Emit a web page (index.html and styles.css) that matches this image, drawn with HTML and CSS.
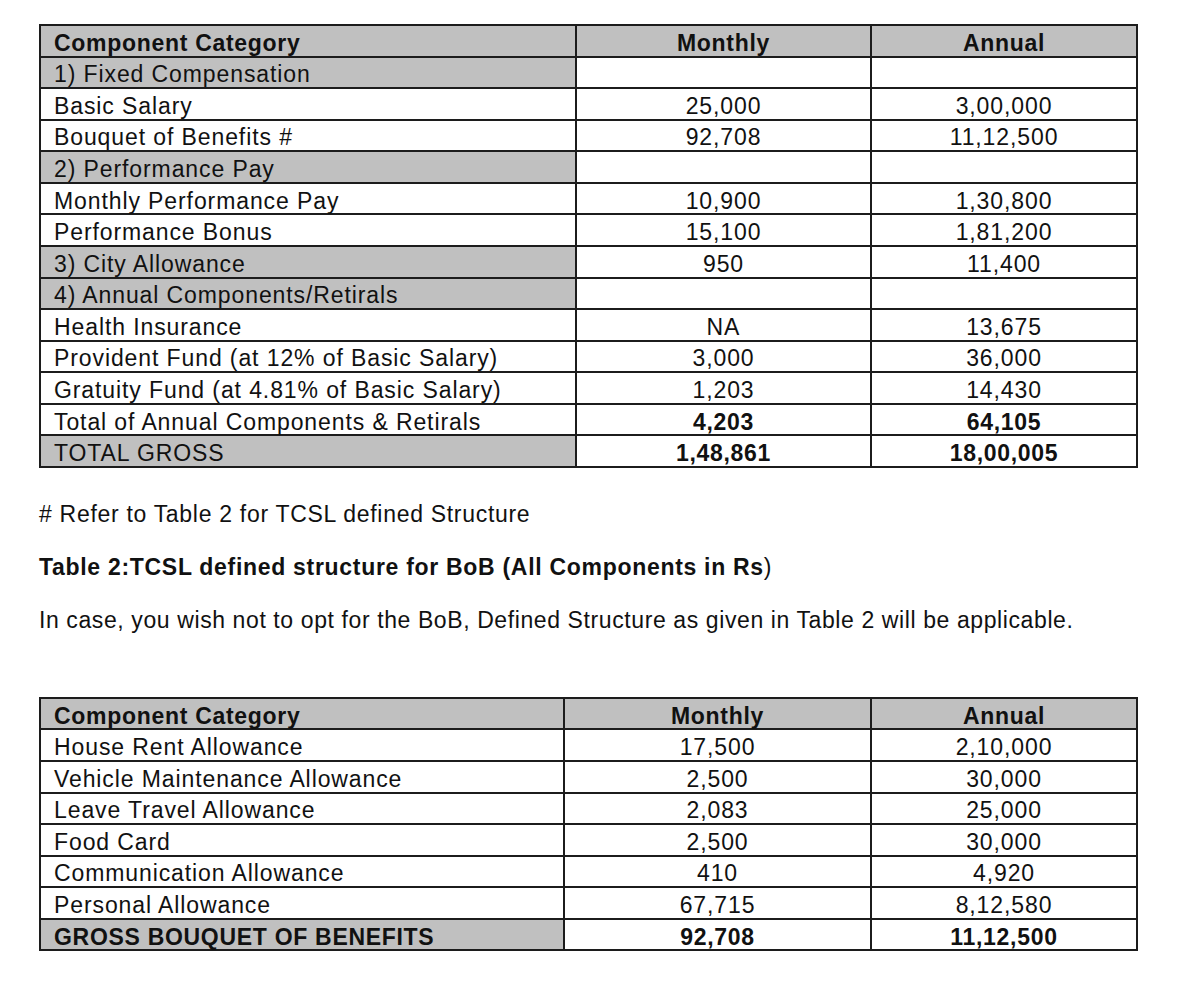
FILE: index.html
```html
<!DOCTYPE html>
<html>
<head>
<meta charset="utf-8">
<link rel="stylesheet" href="styles.css">
</head>
<body>
<div class="page">
  <table class="grid t1">
    <colgroup><col class="c1a"><col class="c2a"><col class="c3"></colgroup>
    <tr class="head"><td class="shade b">Component Category</td><td class="shade b num">Monthly</td><td class="shade b num">Annual</td></tr>
    <tr><td class="shade">1) Fixed Compensation</td><td></td><td></td></tr>
    <tr><td>Basic Salary</td><td class="num">25,000</td><td class="num">3,00,000</td></tr>
    <tr><td>Bouquet of Benefits #</td><td class="num">92,708</td><td class="num">11,12,500</td></tr>
    <tr><td class="shade">2) Performance Pay</td><td></td><td></td></tr>
    <tr><td>Monthly Performance Pay</td><td class="num">10,900</td><td class="num">1,30,800</td></tr>
    <tr><td>Performance Bonus</td><td class="num">15,100</td><td class="num">1,81,200</td></tr>
    <tr><td class="shade">3) City Allowance</td><td class="num">950</td><td class="num">11,400</td></tr>
    <tr><td class="shade">4) Annual Components/Retirals</td><td></td><td></td></tr>
    <tr><td>Health Insurance</td><td class="num">NA</td><td class="num">13,675</td></tr>
    <tr><td>Provident Fund (at 12% of Basic Salary)</td><td class="num">3,000</td><td class="num">36,000</td></tr>
    <tr><td>Gratuity Fund (at 4.81% of Basic Salary)</td><td class="num">1,203</td><td class="num">14,430</td></tr>
    <tr><td>Total of Annual Components &amp; Retirals</td><td class="num b">4,203</td><td class="num b">64,105</td></tr>
    <tr><td class="shade">TOTAL GROSS</td><td class="num b">1,48,861</td><td class="num b">18,00,005</td></tr>
  </table>

  <p class="note">#&nbsp;Refer to Table 2 for TCSL defined Structure</p>
  <p class="title"><span class="b">Table 2:TCSL defined structure for BoB (All Components in Rs</span>)</p>
  <p class="note tight">In case, you wish not to opt for the BoB, Defined Structure as given in Table 2 will be applicable.</p>

  <table class="grid t2">
    <colgroup><col class="c1b"><col class="c2b"><col class="c3"></colgroup>
    <tr class="head"><td class="shade b">Component Category</td><td class="shade b num">Monthly</td><td class="shade b num">Annual</td></tr>
    <tr><td>House Rent Allowance</td><td class="num">17,500</td><td class="num">2,10,000</td></tr>
    <tr><td>Vehicle Maintenance Allowance</td><td class="num">2,500</td><td class="num">30,000</td></tr>
    <tr><td>Leave Travel Allowance</td><td class="num">2,083</td><td class="num">25,000</td></tr>
    <tr><td>Food Card</td><td class="num">2,500</td><td class="num">30,000</td></tr>
    <tr><td>Communication Allowance</td><td class="num">410</td><td class="num">4,920</td></tr>
    <tr><td>Personal Allowance</td><td class="num">67,715</td><td class="num">8,12,580</td></tr>
    <tr><td class="shade b">GROSS BOUQUET OF BENEFITS</td><td class="num b">92,708</td><td class="num b">11,12,500</td></tr>
  </table>
</div>
</body>
</html>
```

FILE: styles.css
```css
html, body {
  margin: 0;
  padding: 0;
  background: #ffffff;
}
.page {
  padding: 24px 0 0 39px;
  font-family: "Liberation Sans", Arial, Helvetica, sans-serif;
  font-size: 23px;
  letter-spacing: 0.7px;
  color: #111111;
}
.grid {
  border-collapse: collapse;
  table-layout: fixed;
  width: 1097px;
  border: 2px solid #444444;
}
.grid td {
  height: 31.57px;
  box-sizing: border-box;
  padding: 4px 13px 0 13px;
  border: 2px solid #1c1c1c;
  line-height: 24px;
  letter-spacing: 0.9px;
  white-space: nowrap;
  vertical-align: middle;
}
.grid td.b { letter-spacing: 0.7px; }
.c1a { width: 536px; }
.c2a { width: 295px; }
.c1b { width: 524px; }
.c2b { width: 307px; }
.c3 { width: 266px; }
.shade { background: #c0c0c0; }
.b { font-weight: bold; }
.num { text-align: center; }
.note, .title {
  margin: 0;
  line-height: 27px;
}
.tight { letter-spacing: 0.6px; }
.t1 + .note { margin-top: 33px; }
.title { margin-top: 26px; }
.title + .note { margin-top: 26px; }
.t2 { margin-top: 63px; }
```
